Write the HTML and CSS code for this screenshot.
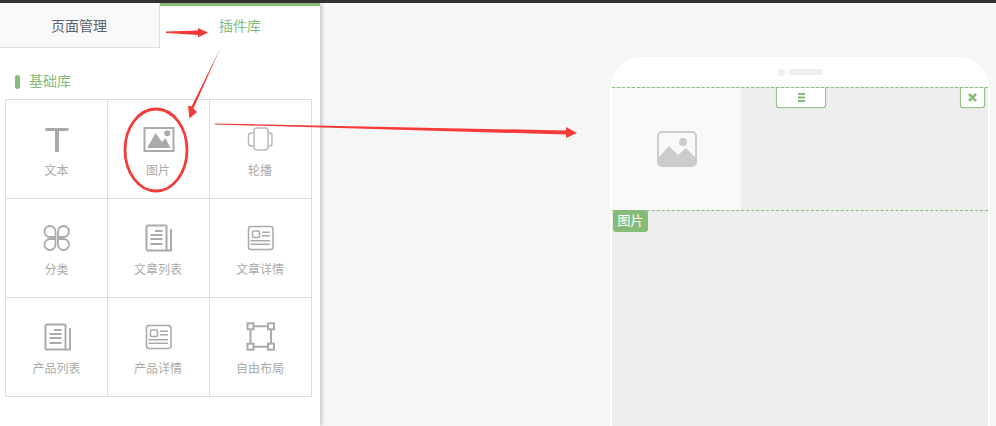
FILE: index.html
```html
<!DOCTYPE html>
<html lang="zh-CN">
<head>
    <meta charset="UTF-8">
    <title>插件库</title>
    <link rel="stylesheet" href="styles.css">
</head>
<body>
    <div class="topbar"></div>
    <div class="main">
        <div class="sidebar">
            <div class="tabs">
                <div class="tab">页面管理</div>
                <div class="tab active">插件库</div>
            </div>
            <div class="group-title">基础库</div>
            <div class="plugin-grid">
                <div class="plugin">
                    <svg class="icon" viewBox="0 0 36 36"><path d="M6.500 6h23v3H20v21h-4V9H6.500z" fill="#aaa"/></svg>
                    <span>文本</span>
                </div>
                <div class="plugin">
                    <svg class="icon" viewBox="0 0 36 36"><rect x="4.500" y="6" width="29" height="23" fill="none" stroke="#aaa" stroke-width="2"/><path d="M7.200 26l8.300-15 6.500 9 3.500-4 5 10z" fill="#aaa"/><circle cx="27.200" cy="11.300" r="3" fill="#aaa"/></svg>
                    <span>图片</span>
                </div>
                <div class="plugin">
                    <svg class="icon" viewBox="0 0 36 36" fill="none" stroke="#bbb" stroke-width="1.500"><rect x="12" y="6" width="14" height="22" rx="3"/><path d="M12 11H9a2.500 2.500 0 0 0-2.500 2.500v8A2.500 2.500 0 0 0 9 24h3M26 11h1.500a2.500 2.500 0 0 1 2.500 2.500v8a2.500 2.500 0 0 1-2.500 2.500H26"/></svg>
                    <span>轮播</span>
                </div>
                <div class="plugin">
                    <svg class="icon" viewBox="0 0 36 36" fill="none" stroke="#aaa" stroke-width="1.800"><path d="M16.500 16H11a5.500 5.500 0 1 1 5.500-5zM19 16h5.500A5.500 5.500 0 1 0 19 11zM16.500 18H11a5.500 5.500 0 1 0 5.500 5.500zM19 18h5.500A5.500 5.500 0 1 1 19 23.500z"/></svg>
                    <span>分类</span>
                </div>
                <div class="plugin">
                    <svg class="icon" viewBox="0 0 36 36" fill="none" stroke="#aaa" stroke-width="2"><path d="M26.500 4.500H8A1.500 1.500 0 0 0 6.500 6v22A1.500 1.500 0 0 0 8 29.500h23V8M26.500 4.500v25M15 10h7.500M10.500 14h12M10.500 18h12M10.500 23h12"/></svg>
                    <span>文章列表</span>
                </div>
                <div class="plugin">
                    <svg class="icon" viewBox="0 0 36 36" fill="none" stroke="#aaa" stroke-width="1.500"><rect x="6.500" y="5.500" width="24.500" height="23" rx="2.500"/><rect x="10.500" y="10" width="7" height="6.500" rx="1.500"/><path d="M20 11.300h8M20 14.700h8M8.500 19.700H28M8.500 23.300H28"/></svg>
                    <span>文章详情</span>
                </div>
                <div class="plugin">
                    <svg class="icon" viewBox="0 0 36 36" fill="none" stroke="#aaa" stroke-width="2"><path d="M26.500 4.500H8A1.500 1.500 0 0 0 6.500 6v22A1.500 1.500 0 0 0 8 29.500h23V8M26.500 4.500v25M15 10h7.500M10.500 14h12M10.500 18h12M10.500 23h12"/></svg>
                    <span>产品列表</span>
                </div>
                <div class="plugin">
                    <svg class="icon" viewBox="0 0 36 36" fill="none" stroke="#aaa" stroke-width="1.500"><rect x="6.500" y="5.500" width="24.500" height="23" rx="2.500"/><rect x="10.500" y="10" width="7" height="6.500" rx="1.500"/><path d="M20 11.300h8M20 14.700h8M8.500 19.700H28M8.500 23.300H28"/></svg>
                    <span>产品详情</span>
                </div>
                <div class="plugin">
                    <svg class="icon" viewBox="0 0 36 36" fill="none" stroke="#aaa" stroke-width="2"><rect x="5.500" y="3.300" width="6" height="6"/><rect x="26" y="3.300" width="6" height="6"/><rect x="5.500" y="23.700" width="6" height="6"/><rect x="26" y="23.700" width="6" height="6"/><path d="M11.500 6.300H26M11.500 26.700H26M8.500 9.300v14.400M29 9.300v14.400"/></svg>
                    <span>自由布局</span>
                </div>
            </div>
        </div>
        <div class="stage">
            <div class="phone">
                <div class="phone-head">
                    <i class="camera"></i>
                    <i class="speaker"></i>
                </div>
                <div class="phone-body">
                    <div class="module">
                        <div class="placeholder">
                            <svg width="40" height="36" viewBox="0 0 40 36"><rect x="1" y="1" width="38" height="34" rx="4" fill="#f9f9f9" stroke="#ccc" stroke-width="2"/><path d="M1 27l11-12 9 9 8-7 10 10v4a4 4 0 0 1-4 4H5a4 4 0 0 1-4-4z" fill="#ccc"/><circle cx="26" cy="11" r="4" fill="#ccc"/></svg>
                        </div>
                        <div class="handle">
                            <svg width="7" height="9" viewBox="0 0 7 9"><path d="M0 1h7M0 4.500h7M0 8h7" stroke="#86bc78" stroke-width="2"/></svg>
                        </div>
                        <div class="close">
                            <svg width="9" height="9" viewBox="0 0 9 9"><path d="M1 1l7 7M8 1l-7 7" stroke="#86bc78" stroke-width="2.500"/></svg>
                        </div>
                    </div>
                    <span class="module-tag">图片</span>
                </div>
            </div>
        </div>
    </div>

    <!-- red notes drawn over the screenshot -->
    <svg class="notes" width="996" height="426" viewBox="0 0 996 426">
        <path d="M166 31.500L198 30.500V28l10 4.500-10 5V35L166 33z" fill="#f53a3a"/>
        <path d="M220.500 48L193.500 108.500l3.500 3.500-7.500 6.500-1.500-13 3.500 1z" fill="#f53a3a"/>
        <path d="M215 123.500L566 130.500v-3.500l11 6-11 5v-3.500L215 124.500z" fill="#f53a3a"/>
        <ellipse cx="156" cy="150" rx="31" ry="41" fill="none" stroke="#f53a3a" stroke-width="2.800"/>
    </svg>
</body>
</html>
```
FILE: styles.css
```css
* {
    box-sizing: border-box;
}

body {
    margin: 0;
    height: 426px;
    overflow: hidden;
    position: relative;
    font-family: "Liberation Sans", "Noto Sans CJK SC", sans-serif;
    background-color: #f6f6f6;
}

.topbar {
    height: 3px;
    background-color: #333;
}

.main {
    display: flex;
    height: 423px;
    overflow: hidden;
}

.sidebar {
    width: 320px;
    flex-shrink: 0;
    position: relative;
    background-color: #fff;
    box-shadow: 2px 0 4px rgba(0, 0, 0, 0.2);
}

.tabs {
    display: flex;
    height: 45px;
}

.tab {
    width: 160px;
    display: flex;
    align-items: center;
    justify-content: center;
    font-size: 14px;
    color: #5a6270;
    background-color: #f9f9f9;
    border-right: 1px solid #ddd;
    border-bottom: 1px solid #ddd;
    padding-right: 1px;
}

.tab.active {
    color: #86bc78;
    background-color: #fff;
    border-top: 3px solid #86bc78;
    border-right: 0;
    border-bottom: 0;
    padding: 0 0 5px;
}

.group-title {
    margin: 23px 0 0 15px;
    padding-left: 14px;
    height: 28px;
    font-size: 14px;
    line-height: 20px;
    color: #86bc78;
    position: relative;
}

.group-title::before {
    content: "";
    position: absolute;
    left: 0;
    top: 4px;
    width: 5px;
    height: 14px;
    border-radius: 3px;
    background-color: #86bc78;
}

.plugin-grid {
    margin-left: 5px;
    width: 307px;
    display: grid;
    grid-template-columns: repeat(3, 102px);
    grid-auto-rows: 99px;
    border-top: 1px solid #ddd;
    border-left: 1px solid #ddd;
}

.plugin {
    display: flex;
    flex-direction: column;
    align-items: center;
    border-right: 1px solid #ddd;
    border-bottom: 1px solid #ddd;
    padding: 22px 1px 0 0;
    font-size: 12px;
    color: #aaa;
}

.plugin:nth-child(3n+1) {
    padding-right: 0;
}

.icon {
    width: 36px;
    height: 36px;
    margin-bottom: 3px;
}

.stage {
    flex: 1;
    padding: 54px 0 0 290px;
}

.phone {
    width: 380px;
    height: 369px;
    background-color: #fff;
    border-radius: 32px 32px 0 0;
    box-shadow: 0 0 2px rgba(0, 0, 0, 0.04);
    display: flex;
    flex-direction: column;
}

.phone-head {
    height: 30px;
    display: flex;
    align-items: center;
    justify-content: center;
    gap: 4px;
}

.camera {
    width: 7px;
    height: 7px;
    border-radius: 50%;
    background-color: #eee;
}

.speaker {
    width: 34px;
    height: 6px;
    border-radius: 3px;
    background-color: #eee;
}

.phone-body {
    flex: 1;
    margin: 0 2px;
    background-color: #eee;
}

.module {
    position: relative;
    height: 124px;
    border-top: 1px dashed #86bc78;
    border-bottom: 1px dashed #86bc78;
}

.placeholder {
    width: 129px;
    height: 122px;
    background-color: #f9f9f9;
    display: flex;
    align-items: center;
    justify-content: center;
}

.handle, .close {
    position: absolute;
    top: 0;
    height: 20px;
    background-color: #fff;
    border: 1px solid #93c486;
    border-top: 0;
    border-radius: 0 0 3px 3px;
    box-shadow: 0 0 1px #93c486;
    display: flex;
    align-items: center;
    justify-content: center;
}

.handle {
    left: 164px;
    width: 50px;
}

.close {
    right: 3px;
    width: 25px;
}

.module-tag {
    display: block;
    margin: -1px 0 0 1px;
    position: relative;
    width: 35px;
    height: 22px;
    line-height: 22px;
    text-align: center;
    font-size: 13px;
    color: #fff;
    background-color: #86bc78;
    border-radius: 3px;
}

.notes {
    position: absolute;
    left: 0;
    top: 0;
    pointer-events: none;
}
```
